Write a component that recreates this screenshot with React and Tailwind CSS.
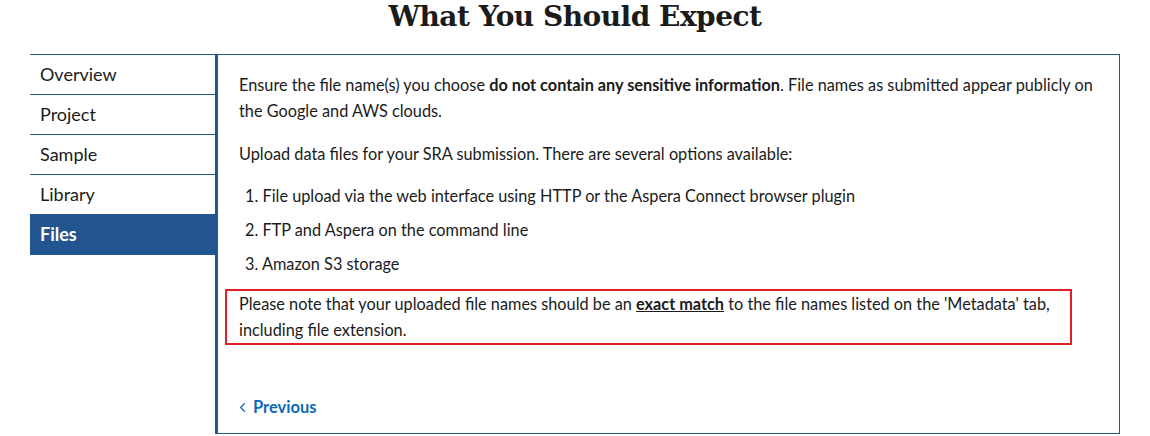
import { ChevronLeft } from 'lucide-react';

const NAV = ['Overview', 'Project', 'Sample', 'Library', 'Files'];

export default function App() {
    return (
        <div className="bg-white text-[#1b1b1b] font-['Lato','Liberation_Sans',sans-serif] w-[1150px] h-[436px] overflow-hidden">
            <h1 className="text-center font-['DejaVu_Serif','Liberation_Serif',serif] font-bold text-[28px] leading-[34px] h-[54px] tracking-[-0.5px]">
                What You Should Expect
            </h1>

            <div className="flex ml-[30px] w-[1090px]">
                {/* Side nav */}
                <ul className="w-[185px] border-t border-[#22548f] text-[18px]">
                    {NAV.map(item => (
                        <li
                            key={item}
                            className={`h-[40px] flex items-center pl-[10px] border-b border-[#22548f] ${item === 'Files' ? 'bg-[#22548f] text-white font-bold' : ''}`}
                        >
                            {item}
                        </li>
                    ))}
                </ul>

                {/* Step content */}
                <div className="flex-1 h-[380px] border-t border-r border-b border-l-[3px] border-[#22548f] pl-[21px] pr-[14px] pt-[17px] text-[16.3px] leading-[26px]">
                    <p>
                        Ensure the file name(s) you choose <strong>do not contain any sensitive information</strong>. File names as submitted appear publicly on the Google and AWS clouds.
                    </p>
                    <p className="mt-[17px]">
                        Upload data files for your SRA submission. There are several options available:
                    </p>
                    <ol className="mt-[16px] pl-[6px] flex flex-col gap-[8px]">
                        <li>1. File upload via the web interface using HTTP or the Aspera Connect browser plugin</li>
                        <li>2. FTP and Aspera on the command line</li>
                        <li>3. Amazon S3 storage</li>
                    </ol>
                    <div className="mt-[12px] -ml-[14px] w-[847px] border-2 border-[#e51e2a] pl-[12px]">
                        Please note that your uploaded file names should be an <strong className="underline">exact match</strong> to the file names listed on the 'Metadata' tab, including file extension.
                    </div>
                    <a href="#" className="mt-[49px] flex items-center gap-[3px] text-[#0b6bb8] font-bold text-[16.5px] w-fit">
                        <ChevronLeft size={15} strokeWidth={2} className="-ml-[4px]" />
                        Previous
                    </a>
                </div>
            </div>
        </div>
    );
}
